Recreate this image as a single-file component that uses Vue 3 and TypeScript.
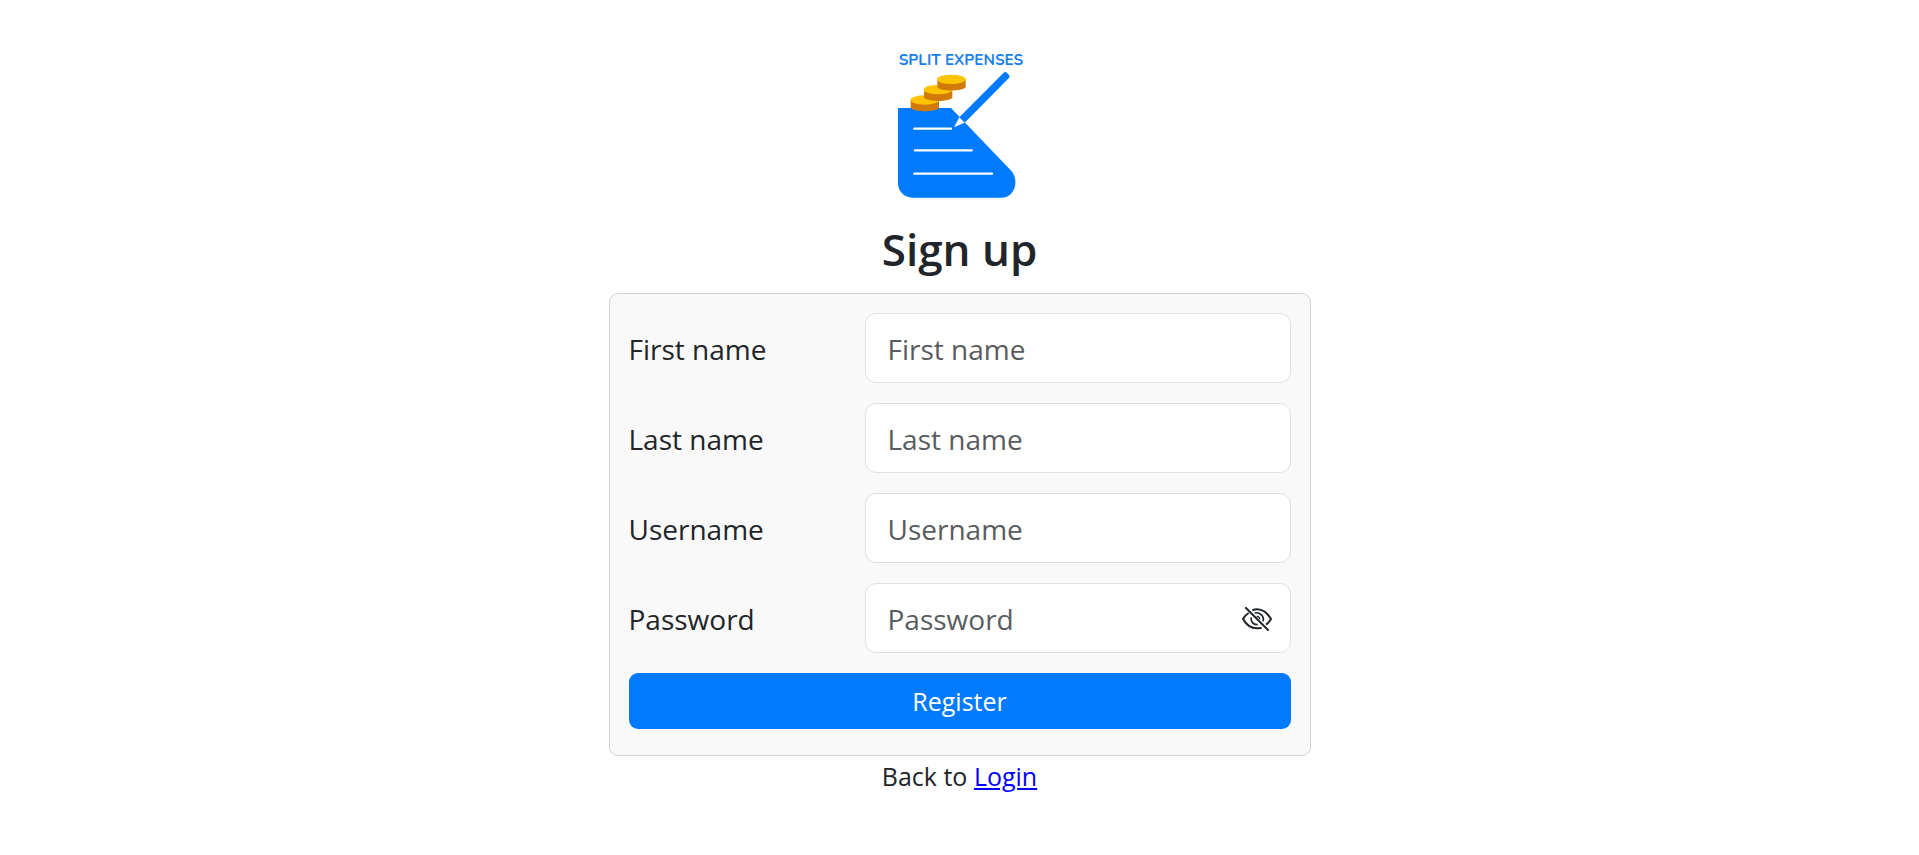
<script setup lang="ts">
import { reactive, ref } from 'vue'

type FieldKey = 'firstName' | 'lastName' | 'username' | 'password'

const fields: { key: FieldKey; label: string; autocomplete: string }[] = [
  { key: 'firstName', label: 'First name', autocomplete: 'given-name' },
  { key: 'lastName', label: 'Last name', autocomplete: 'family-name' },
  { key: 'username', label: 'Username', autocomplete: 'username' },
  { key: 'password', label: 'Password', autocomplete: 'new-password' },
]

const form = reactive<Record<FieldKey, string>>({
  firstName: '',
  lastName: '',
  username: '',
  password: '',
})
const passwordVisible = ref(false)
</script>

<template>
  <main class="page">
    <svg class="logo" viewBox="0 0 480 510" role="img" aria-label="Split Expenses">
      <text class="logo-text" x="243" y="74" text-anchor="middle">SPLIT EXPENSES</text>
      <path
        d="M54 204H213L395 394C418 422 405 473 363 473H98C72 473 54 453 54 429Z"
        fill="#007bff"
      />
      <g v-for="[x, y] in [[92, 180], [132, 149], [172, 118]]" :key="x">
        <path
          :d="`M${x} ${y}v24c12 13 73 13 85 0v-24z`"
          fill="#d27a08"
        />
        <ellipse :cx="x + 42" :cy="y" rx="43" ry="14" fill="#ffc400" />
      </g>
      <path d="M238 232L371 98Q376 94 381 99L387 105Q391 110 386 115L254 248Z" fill="#007bff" />
      <path d="M238 232L254 248L222 262Z" fill="#fff" />
      <g stroke="#fff" stroke-width="7" stroke-linecap="round">
        <path d="M103 266H213M105 331H275M103 401H336" />
      </g>
    </svg>

    <h1 class="title">Sign up</h1>

    <form class="card" @submit.prevent>
      <div v-for="field in fields" :key="field.key" class="row">
        <label class="label" :for="field.key">{{ field.label }}</label>
        <div class="control">
          <input
            :id="field.key"
            v-model="form[field.key]"
            class="input"
            :class="{ 'with-toggle': field.key === 'password' }"
            :type="field.key === 'password' && !passwordVisible ? 'password' : 'text'"
            :placeholder="field.label"
            :autocomplete="field.autocomplete"
          />
          <button
            v-if="field.key === 'password'"
            type="button"
            class="toggle"
            aria-label="Toggle password visibility"
            :aria-pressed="passwordVisible"
            @click="passwordVisible = !passwordVisible"
          >
            <svg class="eye" viewBox="0 0 90 72" fill="none" stroke="#212529" stroke-width="6">
              <path d="M12 3L78 69" stroke-linecap="round" />
              <path d="M20 18C12 23 6 29 3 36C13 54 28 64 45 64C51 64 55 63 59 62" />
              <path d="M31 10C35 8 40 7 45 7C62 7 77 19 87 36C83 43 78 49 72 53" />
              <path d="M28 31C25 43 33 54 47 53" stroke-width="5" />
              <path d="M38 18C54 14 68 28 63 43" stroke-width="5" />
              <path d="M44 28C49 28 53 32 53 37" stroke-width="4" />
            </svg>
          </button>
        </div>
      </div>
      <button type="submit" class="submit">Register</button>
    </form>

    <p class="footer">Back to <a class="link" href="#login">Login</a></p>
  </main>
</template>

<style>
body {
  margin: 0;
  background: #fff;
}
</style>

<style scoped>
.page {
  display: flex;
  flex-direction: column;
  align-items: center;
  padding: 40px 16px 32px;
  color: #212529;
  font-family: 'Segoe UI', 'Open Sans', 'Noto Sans', sans-serif;
}
.logo {
  width: 160px;
  height: 170px;
}
.logo-text {
  fill: #1a7fe8;
  font-family: Nunito, Lato, sans-serif;
  font-size: 46px;
  font-weight: 700;
}
.title {
  margin: 10px 0 14px;
  font-size: 44px;
  font-weight: 600;
  line-height: 59px;
}
.card {
  box-sizing: border-box;
  width: 100%;
  max-width: 702px;
  padding: 19px 19px 26px;
  border: 1px solid #d3d4d5;
  border-radius: 9px;
  background: #f9f9f9;
}
.row {
  display: grid;
  grid-template-columns: 236px 1fr;
  align-items: center;
  margin-bottom: 20px;
}
.label {
  padding-top: 2px;
  font-size: 28px;
  line-height: 42px;
}
.control {
  position: relative;
}
.input {
  display: block;
  box-sizing: border-box;
  width: 100%;
  height: 70px;
  padding: 2px 22px 0;
  border: 1px solid #dee2e6;
  border-radius: 11px;
  background: #fff;
  color: #212529;
  font-family: inherit;
  font-size: 28px;
}
.with-toggle {
  padding-right: 64px;
}
.input::placeholder {
  color: #595c5f;
  opacity: 1;
}
.toggle {
  position: absolute;
  top: 0;
  right: 19px;
  display: flex;
  align-items: center;
  height: 100%;
  padding: 2px 0 0;
  border: 0;
  background: none;
  cursor: pointer;
}
.eye {
  width: 30px;
  height: 24px;
}
.submit {
  display: block;
  width: 100%;
  height: 56px;
  padding: 0;
  border: 0;
  border-radius: 9px;
  background: #007bff;
  color: #fff;
  font-family: inherit;
  font-size: 25px;
  cursor: pointer;
}
.footer {
  margin: 2px 0 0;
  font-size: 25px;
  line-height: 36px;
}
.link {
  color: #00f;
  text-decoration: underline;
}
</style>
